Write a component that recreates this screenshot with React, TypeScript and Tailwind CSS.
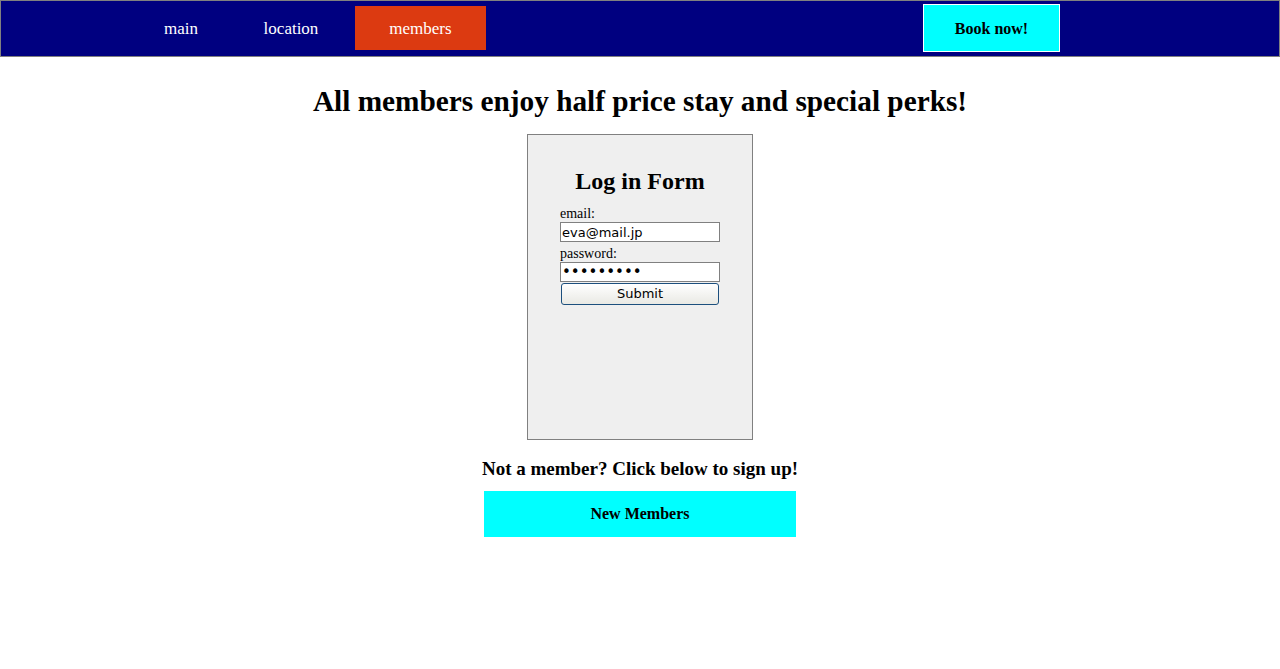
export default function App() {
  return (
    <div className="min-h-[669px] bg-white font-['Liberation_Serif',serif] text-black">
      <header className="h-[57px] border border-[#808080] bg-[#000080] flex items-center">
        <nav className="flex items-center h-full">
          <a className="ml-[125px] w-[110px] text-center text-white text-[17px]">main</a>
          <a className="w-[110px] text-center text-white text-[17px]">location</a>
          <a className="ml-[9px] mb-[1px] pt-[2px] w-[131px] h-[44px] flex items-center justify-center bg-[#dc3a11] text-white text-[17px]">members</a>
        </nav>
        <button className="ml-[437px] mb-[2px] pt-[2px] w-[137px] h-[48px] bg-[#00ffff] border border-white font-bold text-[16px]">
          Book now!
        </button>
      </header>
      <main className="flex flex-col items-center">
        <h1 className="mt-[26px] text-[29.3px] font-bold leading-[36px]">
          All members enjoy half price stay and special perks!
        </h1>
        <div className="mt-[15px] w-[226px] h-[306px] bg-[#efefef] border border-[#808080] flex flex-col items-center">
          <h2 className="mt-[31px] text-[24px] font-bold leading-[30px]">Log in Form</h2>
          <form className="mt-[10px] w-[160px] flex flex-col text-[14px] leading-[16px]">
            <label>email:</label>
            <input
              className="h-[20px] border border-[#808080] bg-white px-[1px] text-[13px] font-['DejaVu_Sans',sans-serif] outline-none"
              defaultValue="eva@mail.jp"
            />
            <label className="mt-[4px]">password:</label>
            <input
              type="password"
              className="h-[20px] border border-[#808080] bg-white px-[1px] text-[15px] font-['DejaVu_Sans',sans-serif] outline-none"
              defaultValue="password1"
            />
            <button
              type="button"
              className="mt-[1px] mx-[1px] h-[22px] rounded-[3px] border border-[#1c4f7d] bg-gradient-to-b from-white to-[#e9e9e4] text-[13px] font-['DejaVu_Sans',sans-serif]"
            >
              Submit
            </button>
          </form>
        </div>
        <h3 className="mt-[18px] text-[19px] font-bold leading-[22px]">Not a member? Click below to sign up!</h3>
        <button className="mt-[11px] w-[312px] h-[46px] bg-[#00ffff] font-bold text-[16px]">New Members</button>
      </main>
    </div>
  );
}
